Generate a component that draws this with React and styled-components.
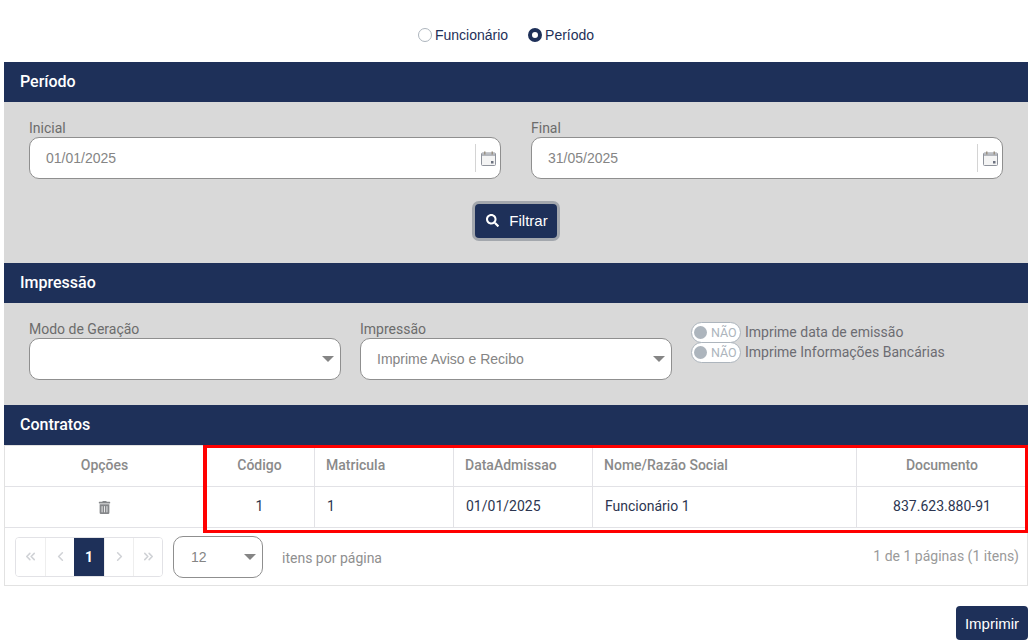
import React from "react";
import styled, { createGlobalStyle } from "styled-components";
import { FaSearch, FaTrashAlt } from "react-icons/fa";
import { ChevronLeft, ChevronRight, ChevronsLeft, ChevronsRight } from "lucide-react";

const navy = "#1e3059";
const arial = `"Liberation Sans", Arial, sans-serif`;

const GlobalStyle = createGlobalStyle`
  html, body {
    margin: 0;
    padding: 0;
    background: #fff;
    font-family: Roboto, "Liberation Sans", sans-serif;
  }
  * { box-sizing: border-box; }
`;

const Page = styled.div`
  position: relative;
  width: 1031px;
  height: 644px;
  padding: 0 3px 0 4px;
  overflow: hidden;
`;

const RadioRow = styled.div`
  height: 62px;
  padding: 7px 20px 0 0;
  display: flex;
  align-items: center;
  justify-content: center;
  gap: 20px;
`;

const RadioItem = styled.label`
  display: flex;
  align-items: center;
  gap: 3px;
  font-family: ${arial};
  font-size: 14px;
  color: ${navy};
`;

const RadioDot = styled.span`
  width: 14px;
  height: 14px;
  border-radius: 50%;
  background: #fff;
  border: ${(p) => (p.$on ? `4px solid ${navy}` : "1px solid #adb5bd")};
`;

const SectionHeader = styled.div`
  height: 40px;
  background: ${navy};
  color: #fff;
  font-weight: 500;
  font-size: 16px;
  display: flex;
  align-items: center;
  padding: 0 0 2px 16px;
`;

const GreyPanel = styled.div`
  background: #d9d9d9;
  padding: 18px 25px 25px;
`;

const DateGrid = styled.div`
  display: grid;
  grid-template-columns: 472px 472px;
  gap: 30px;
`;

const PrintGrid = styled.div`
  display: grid;
  grid-template-columns: 312px 312px 1fr;
  gap: 19px;
`;

const FieldLabel = styled.div`
  font-size: 14px;
  line-height: 16px;
  color: #6c6c6c;
  margin-bottom: 1px;
`;

const InputBox = styled.div`
  height: 42px;
  background: #fff;
  border: 1px solid #8f8f8f;
  border-radius: 10px;
  display: flex;
  align-items: center;
  padding-left: 16px;
  font-family: ${arial};
  font-size: 14px;
  color: #858585;
`;

const CalendarSlot = styled.div`
  margin-left: auto;
  width: 25px;
  height: 28px;
  border-left: 1px solid #d4d4d4;
  display: flex;
  align-items: center;
  justify-content: center;
`;

const Caret = styled.span`
  margin-left: auto;
  margin-right: 6px;
  width: 0;
  height: 0;
  border-left: 6px solid transparent;
  border-right: 6px solid transparent;
  border-top: 6px solid #858585;
`;

const ButtonRow = styled.div`
  display: flex;
  justify-content: center;
  margin-top: 25px;
`;

const FilterButton = styled.button`
  width: 82px;
  height: 34px;
  padding: 0 0 2px 2px;
  background: ${navy};
  color: #fff;
  border: none;
  border-radius: 4px;
  box-shadow: 0 0 0 3px #a3a7ad;
  font: 400 15px ${arial};
  display: flex;
  align-items: center;
  justify-content: center;
  gap: 10px;
`;

const SwitchColumn = styled.div`
  display: flex;
  flex-direction: column;
  padding-top: 1px;
`;

const SwitchRow = styled.div`
  display: flex;
  align-items: center;
  gap: 4px;
  height: 20px;
  font-size: 14px;
  color: #6c6c72;
  white-space: nowrap;
`;

const Switch = styled.span`
  width: 50px;
  height: 21px;
  border-radius: 11px;
  border: 1px solid #adb5bd;
  background: #fff;
  display: flex;
  align-items: center;
  padding-left: 2px;
  gap: 4px;
  font-size: 12.5px;
  color: #adb5bd;
  flex: none;
`;

const SwitchKnob = styled.span`
  width: 13px;
  height: 13px;
  border-radius: 50%;
  background: #adb5bd;
`;

const TableCard = styled.div`
  border: 1px solid #e2e2e2;
`;

const Row = styled.div`
  display: grid;
  grid-template-columns: 199px 110px 139px 139px 264px 1fr;
  height: 41px;
  border-bottom: 1px solid #e2e2e6;
`;

const Cell = styled.div`
  display: flex;
  align-items: center;
  justify-content: ${(p) => (p.$left ? "flex-start" : "center")};
  padding-left: ${(p) => (p.$left ? (p.$head ? "11px" : "12px") : "0")};
  padding-bottom: 2px;
  border-left: ${(p) => (p.$first ? "none" : "1px solid #e2e2e6")};
  font-size: 14px;
  font-weight: ${(p) => (p.$head ? 500 : 400)};
  color: ${(p) => (p.$head ? "#8a8a8a" : "#2c3550")};
`;

const TrashCell = styled(Cell)`
  padding-bottom: 0;
`;

const PagerBar = styled.div`
  height: 57px;
  display: flex;
  align-items: center;
  padding: 0 8px 0 10px;
  font-size: 14px;
  color: #8f8f8f;
`;

const Pager = styled.div`
  display: flex;
  height: 40px;
  border: 1px solid #e2e2e6;
  border-radius: 4px;
  overflow: hidden;
  margin-right: 10px;
`;

const PageButton = styled.span`
  width: ${(p) => (p.$active ? "30px" : "29px")};
  display: flex;
  align-items: center;
  justify-content: center;
  background: ${(p) => (p.$active ? navy : "#fff")};
  color: ${(p) => (p.$active ? "#fff" : "#d0d2d6")};
  font-weight: 700;
  font-size: 14px;
  border-left: ${(p) => (p.$first || p.$active ? "none" : "1px solid #eeeeee")};
`;

const PageSize = styled.div`
  width: 90px;
  height: 42px;
  border: 1px solid #8f8f8f;
  border-radius: 10px;
  display: flex;
  align-items: center;
  padding-left: 17px;
  font-family: ${arial};
  color: #858585;
`;

const PerPage = styled.span`
  margin-left: 19px;
  padding-top: 2px;
`;

const PageInfo = styled.span`
  margin-left: auto;
  padding-bottom: 2px;
  color: #9a9a9a;
`;

const Footer = styled.div`
  display: flex;
  justify-content: flex-end;
  margin-top: 20px;
`;

const PrintButton = styled.button`
  width: 72px;
  height: 34px;
  background: ${navy};
  color: #fff;
  border: none;
  border-radius: 4px;
  font: 400 15px ${arial};
`;

const Highlight = styled.div`
  position: absolute;
  left: 203px;
  top: 445px;
  width: 825px;
  height: 88px;
  border: 3px solid #ff0000;
  border-left-width: 4px;
  pointer-events: none;
`;

function CalendarIcon() {
  return (
    <svg width="15" height="15" viewBox="0 0 15 15">
      <rect x="0.5" y="2" width="14" height="12.5" rx="1" fill="#f4f4f4" stroke="#8f939c" />
      <rect x="1" y="2.5" width="13" height="2.5" fill="#b4b7bd" />
      <rect x="3" y="0.5" width="1.5" height="3" fill="#9a9184" />
      <rect x="10.5" y="0.5" width="1.5" height="3" fill="#9a9184" />
      <rect x="10" y="10" width="2.5" height="2.5" fill="#6c7280" />
    </svg>
  );
}

function DateField({ label, value }) {
  return (
    <div>
      <FieldLabel>{label}</FieldLabel>
      <InputBox>
        {value}
        <CalendarSlot>
          <CalendarIcon />
        </CalendarSlot>
      </InputBox>
    </div>
  );
}

function SelectField({ label, value }) {
  return (
    <div>
      <FieldLabel>{label}</FieldLabel>
      <InputBox>
        {value}
        <Caret />
      </InputBox>
    </div>
  );
}

function Toggle({ label }) {
  return (
    <SwitchRow>
      <Switch>
        <SwitchKnob />
        NÃO
      </Switch>
      {label}
    </SwitchRow>
  );
}

export default function App() {
  return (
    <Page>
      <GlobalStyle />
      <RadioRow>
        <RadioItem>
          <RadioDot />
          Funcionário
        </RadioItem>
        <RadioItem>
          <RadioDot $on />
          Período
        </RadioItem>
      </RadioRow>

      <SectionHeader>Período</SectionHeader>
      <GreyPanel>
        <DateGrid>
          <DateField label="Inicial" value="01/01/2025" />
          <DateField label="Final" value="31/05/2025" />
        </DateGrid>
        <ButtonRow>
          <FilterButton>
            <FaSearch size={13} />
            Filtrar
          </FilterButton>
        </ButtonRow>
      </GreyPanel>

      <SectionHeader>Impressão</SectionHeader>
      <GreyPanel>
        <PrintGrid>
          <SelectField label="Modo de Geração" value="" />
          <SelectField label="Impressão" value="Imprime Aviso e Recibo" />
          <SwitchColumn>
            <Toggle label="Imprime data de emissão" />
            <Toggle label="Imprime Informações Bancárias" />
          </SwitchColumn>
        </PrintGrid>
      </GreyPanel>

      <SectionHeader>Contratos</SectionHeader>
      <TableCard>
        <Row>
          <Cell $head $first>Opções</Cell>
          <Cell $head>Código</Cell>
          <Cell $head $left>Matricula</Cell>
          <Cell $head $left>DataAdmissao</Cell>
          <Cell $head $left>Nome/Razão Social</Cell>
          <Cell $head>Documento</Cell>
        </Row>
        <Row>
          <TrashCell $first>
            <FaTrashAlt size={13} color="#85878a" />
          </TrashCell>
          <Cell>1</Cell>
          <Cell $left>1</Cell>
          <Cell $left>01/01/2025</Cell>
          <Cell $left>Funcionário 1</Cell>
          <Cell>837.623.880-91</Cell>
        </Row>
        <PagerBar>
          <Pager>
            <PageButton $first><ChevronsLeft size={15} strokeWidth={2.5} /></PageButton>
            <PageButton><ChevronLeft size={15} strokeWidth={2.5} /></PageButton>
            <PageButton $active>1</PageButton>
            <PageButton><ChevronRight size={15} strokeWidth={2.5} /></PageButton>
            <PageButton><ChevronsRight size={15} strokeWidth={2.5} /></PageButton>
          </Pager>
          <PageSize>
            12
            <Caret />
          </PageSize>
          <PerPage>itens por página</PerPage>
          <PageInfo>1 de 1 páginas (1 itens)</PageInfo>
        </PagerBar>
      </TableCard>

      <Footer>
        <PrintButton>Imprimir</PrintButton>
      </Footer>
      <Highlight />
    </Page>
  );
}
